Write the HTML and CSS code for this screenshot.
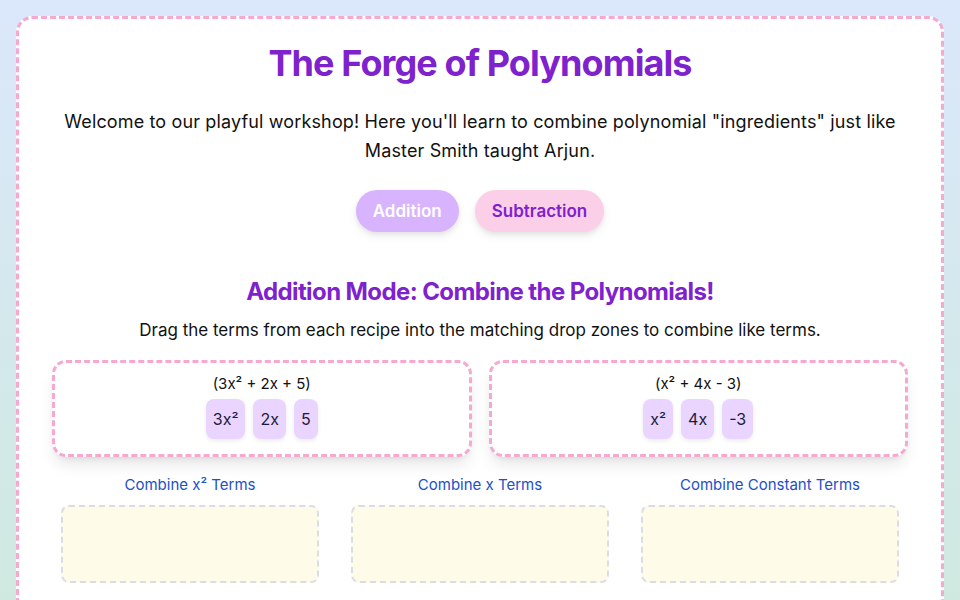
FILE: index.html
```html
<!DOCTYPE html>
<html lang="en">
<head>
<meta charset="utf-8">
<title>The Forge of Polynomials</title>
<link rel="stylesheet" href="styles.css">
</head>
<body>
<main class="forge">
  <h1 class="title">The Forge of Polynomials</h1>
  <p class="intro">Welcome to our playful workshop! Here you'll learn to combine polynomial "ingredients" just like Master Smith taught Arjun.</p>
  <div class="modes">
    <button class="mode mode-add">Addition</button>
    <button class="mode mode-sub">Subtraction</button>
  </div>
  <h2 class="section-title">Addition Mode: Combine the Polynomials!</h2>
  <p class="instructions">Drag the terms from each recipe into the matching drop zones to combine like terms.</p>
  <div class="recipes">
    <div class="recipe">
      <div class="formula">(3x² + 2x + 5)</div>
      <div class="terms">
        <span class="term">3x²</span>
        <span class="term">2x</span>
        <span class="term">5</span>
      </div>
    </div>
    <div class="recipe">
      <div class="formula">(x² + 4x - 3)</div>
      <div class="terms">
        <span class="term">x²</span>
        <span class="term">4x</span>
        <span class="term">-3</span>
      </div>
    </div>
  </div>
  <div class="zones">
    <div class="zone">
      <div class="zone-label">Combine x² Terms</div>
      <div class="drop"></div>
    </div>
    <div class="zone">
      <div class="zone-label">Combine x Terms</div>
      <div class="drop"></div>
    </div>
    <div class="zone">
      <div class="zone-label">Combine Constant Terms</div>
      <div class="drop"></div>
    </div>
  </div>
</main>
</body>
</html>
```

FILE: styles.css
```css
html {
  background: #d3e8e8;
}
body {
  margin: 0;
  padding: 16px;
  min-height: 100vh;
  box-sizing: border-box;
  font-family: Inter, "Noto Sans", sans-serif;
  color: #111;
  background: linear-gradient(to bottom, #dbe7fb 0px, #cfe9e0 600px) no-repeat;
  background-color: #cfe9e0;
}
.forge {
  background: #fff;
  border: 3px dashed #f5a9d0;
  border-radius: 16px;
  padding: 24px 32px 40px;
  min-height: 700px;
}
.title {
  margin: 0 0 24px;
  text-align: center;
  font-size: 36px;
  line-height: 40px;
  font-weight: 700;
  letter-spacing: -0.9px;
  color: #7e22ce;
}
.intro {
  margin: 0 auto 25px;
  max-width: 850px;
  text-align: center;
  font-size: 18px;
  line-height: 29px;
  letter-spacing: 0.14px;
}
.modes {
  display: flex;
  justify-content: center;
  gap: 16px;
  margin-bottom: 44px;
}
.mode {
  font-family: inherit;
  font-size: 17px;
  font-weight: 600;
  line-height: 26px;
  padding: 8px 17px;
  border: none;
  border-radius: 9999px;
  box-shadow: 0 4px 8px rgba(0,0,0,0.08), 0 2px 4px rgba(0,0,0,0.05);
  cursor: pointer;
}
.mode-add {
  background: #d8b4fe;
  color: #fff;
}
.mode-sub {
  background: #fbcfe8;
  color: #7e22ce;
}
.section-title {
  margin: 0 0 10px;
  text-align: center;
  font-size: 24px;
  line-height: 32px;
  font-weight: 700;
  letter-spacing: -0.6px;
  color: #7e22ce;
}
.instructions {
  margin: 0 0 18px;
  text-align: center;
  font-size: 17px;
  line-height: 24px;
}
.recipes {
  display: grid;
  grid-template-columns: 1fr 1fr;
  gap: 17px;
  margin: 0 1px 16px;
}
.recipe {
  border: 3px dashed #f5a9d0;
  border-radius: 14px;
  padding: 9px 16px 15px;
  box-shadow: 0 10px 15px -3px rgba(0,0,0,0.1), 0 4px 6px -4px rgba(0,0,0,0.1);
  text-align: center;
}
.formula {
  font-size: 15px;
  line-height: 24px;
  margin-bottom: 3px;
}
.terms {
  display: flex;
  justify-content: center;
  gap: 8px;
}
.term {
  background: #e9d5ff;
  border-radius: 8px;
  padding: 8px 7px;
  font-size: 16px;
  line-height: 24px;
  color: #1e1b3a;
  box-shadow: 0 2px 4px rgba(0,0,0,0.08);
}
.zones {
  display: grid;
  grid-template-columns: repeat(3, 1fr);
  gap: 32px;
  padding: 0 10px;
}
.zone-label {
  text-align: center;
  font-size: 15px;
  line-height: 24px;
  color: #2150c8;
  margin-bottom: 8px;
}
.drop {
  height: 74px;
  background: #fefce8;
  border: 2px dashed #dcdce6;
  border-radius: 8px;
}
```
